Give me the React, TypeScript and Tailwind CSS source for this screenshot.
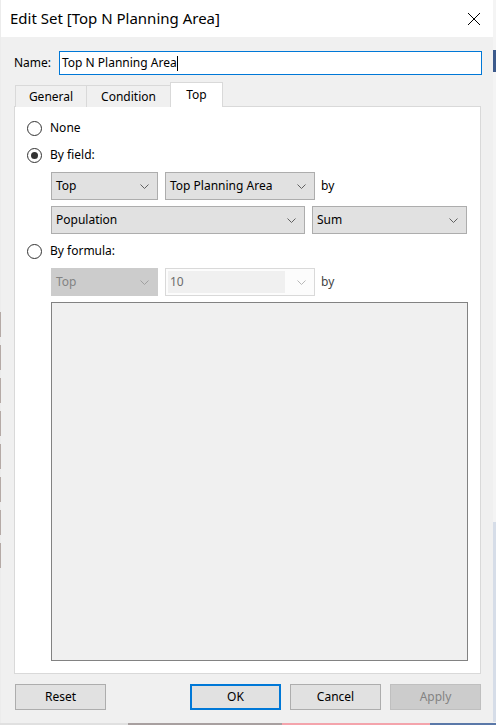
import React from 'react'

const FONT = "font-['Noto_Sans',sans-serif]"

function Chevron({ color = '#606060' }: { color?: string }) {
  return (
    <svg width="9" height="5" viewBox="0 0 9 5" className="shrink-0">
      <path d="M0.5 0.5 L4.5 4.5 L8.5 0.5" fill="none" stroke={color} strokeWidth="1" />
    </svg>
  )
}

function Radio({ label, checked }: { label: string; checked?: boolean }) {
  return (
    <div className="flex items-center h-[20px]">
      <div className="w-[15px] h-[15px] rounded-full border border-[#333] bg-white flex items-center justify-center">
        {checked && <div className="w-[7px] h-[7px] rounded-full bg-[#333]" />}
      </div>
      <span className="ml-[8px] text-[12px] text-black">{label}</span>
    </div>
  )
}

function Select({ value, width, disabled }: { value: string; width: string; disabled?: boolean }) {
  return (
    <div className={`${width} h-full flex items-center justify-between pl-[4px] pr-[8px] border ${disabled ? 'bg-[#cccccc] border-[#cccccc] text-[#838383]' : 'bg-[#e1e1e1] border-[#adadad] text-black'}`}>
      <span className="text-[12px]">{value}</span>
      <Chevron color={disabled ? '#a0a0a0' : '#606060'} />
    </div>
  )
}

function Button({ label, variant }: { label: string; variant?: 'default' | 'disabled' }) {
  const cls =
    variant === 'default'
      ? 'border-2 border-[#0078d7] bg-[#e1e1e1] text-black'
      : variant === 'disabled'
        ? 'border border-[#bfbfbf] bg-[#cccccc] text-[#838383]'
        : 'border border-[#adadad] bg-[#e1e1e1] text-black'
  return (
    <div className={`w-[91px] h-[26px] flex items-center justify-center text-[12px] ${cls}`}>{label}</div>
  )
}

// slivers of whatever sits behind the dialog
const LEFT_MARKS = [0, 1, 2, 3, 4, 5, 6, 7]

export default function App() {
  return (
    <div className={`w-[496px] h-[725px] flex flex-col bg-[#e6e6e6] ${FONT}`}>
      <div className="flex h-[723px]">
        <div className="w-[1px] flex flex-col bg-[#ececec] pt-[312px] gap-[8px]">
          {LEFT_MARKS.map((i) => (
            <div key={i} className="h-[25px] bg-[#b5aaa6]" />
          ))}
        </div>

        <div className="w-[492px] flex flex-col bg-[#f0f0f0]">
          <div className="h-[37px] bg-white flex items-center justify-between pl-[9px] pr-[12px]">
            <span className="text-[15px] text-black">Edit Set [Top N Planning Area]</span>
            <svg width="14" height="14" viewBox="0 0 14 14">
              <path d="M1 1 L13 13 M13 1 L1 13" stroke="#000" strokeWidth="1" />
            </svg>
          </div>

          <div className="flex items-center mt-[14px] h-[24px] pl-[13px]">
            <span className="text-[12px] text-black w-[45px]">Name:</span>
            <div className="w-[423px] h-full border border-[#0078d7] bg-white flex items-center pl-[2px]">
              <span className="text-[12px] text-black">Top N Planning Area</span>
              <div className="w-[1px] h-[15px] bg-black" />
            </div>
          </div>

          <div className="flex items-end h-[25px] mt-[7px] pl-[14px] relative z-10 -mb-px">
            <div className="w-[72px] h-[22px] border border-[#d9d9d9] border-b-0 bg-[#f0f0f0] flex items-center justify-center text-[12px] text-black">General</div>
            <div className="w-[84px] h-[22px] border border-l-0 border-[#d9d9d9] border-b-0 bg-[#f0f0f0] flex items-center justify-center text-[12px] text-black">Condition</div>
            <div className="w-[53px] h-[25px] border border-[#d9d9d9] border-b-0 bg-white flex items-center justify-center text-[12px] text-black -ml-px">Top</div>
          </div>

          <div className="ml-[13px] w-[467px] h-[568px] border border-[#d9d9d9] bg-white flex flex-col pl-[12px] pt-[11px]">
            <Radio label="None" />
            <div className="mt-[7px]">
              <Radio label="By field:" checked />
            </div>
            <div className="flex items-center h-[28px] mt-[7px] ml-[24px] gap-[7px]">
              <Select value="Top" width="w-[107px]" />
              <Select value="Top Planning Area" width="w-[150px]" />
              <span className="text-[12px] text-black -ml-px">by</span>
            </div>
            <div className="flex items-center h-[28px] mt-[6px] ml-[24px] gap-[7px]">
              <Select value="Population" width="w-[254px]" />
              <Select value="Sum" width="w-[155px]" />
            </div>
            <div className="mt-[7px]">
              <Radio label="By formula:" />
            </div>
            <div className="flex items-center h-[28px] mt-[7px] ml-[24px] gap-[7px]">
              <Select value="Top" width="w-[107px]" disabled />
              <div className="w-[150px] h-full border border-[#d9d9d9] bg-[#fcfcfc] flex items-center pl-[2px] pr-[8px] gap-[12px]">
                <div className="flex-1 h-[22px] bg-[#f0f0f0] flex items-center pl-[2px] text-[12px] text-[#6d6d6d]">10</div>
                <Chevron color="#b8b8b8" />
              </div>
              <span className="text-[12px] text-[#444] -ml-px">by</span>
            </div>
            <div className="mt-[6px] ml-[24px] w-[417px] h-[359px] border border-[#828282] bg-[#f0f0f0]" />
          </div>

          <div className="flex mt-[10px] pl-[14px] gap-[9px]">
            <Button label="Reset" />
            <div className="w-[66px]" />
            <Button label="OK" variant="default" />
            <Button label="Cancel" />
            <Button label="Apply" variant="disabled" />
          </div>
        </div>

        <div className="w-[3px] flex flex-col bg-[#f4f4f4]">
          <div className="h-[50px]" />
          <div className="h-[22px] bg-[#3c5a8c]" />
          <div className="h-[450px]" />
          <div className="h-[200px] bg-[#d6dde8]" />
        </div>
      </div>
      <div className="flex h-[2px]">
        <div className="w-[128px] bg-[#e0e0e0]" />
        <div className="w-[154px] bg-[#a8a0a0]" />
        <div className="w-[148px] bg-[#f4a4ac]" />
        <div className="flex-1 bg-[#5a78a8]" />
      </div>
    </div>
  )
}
